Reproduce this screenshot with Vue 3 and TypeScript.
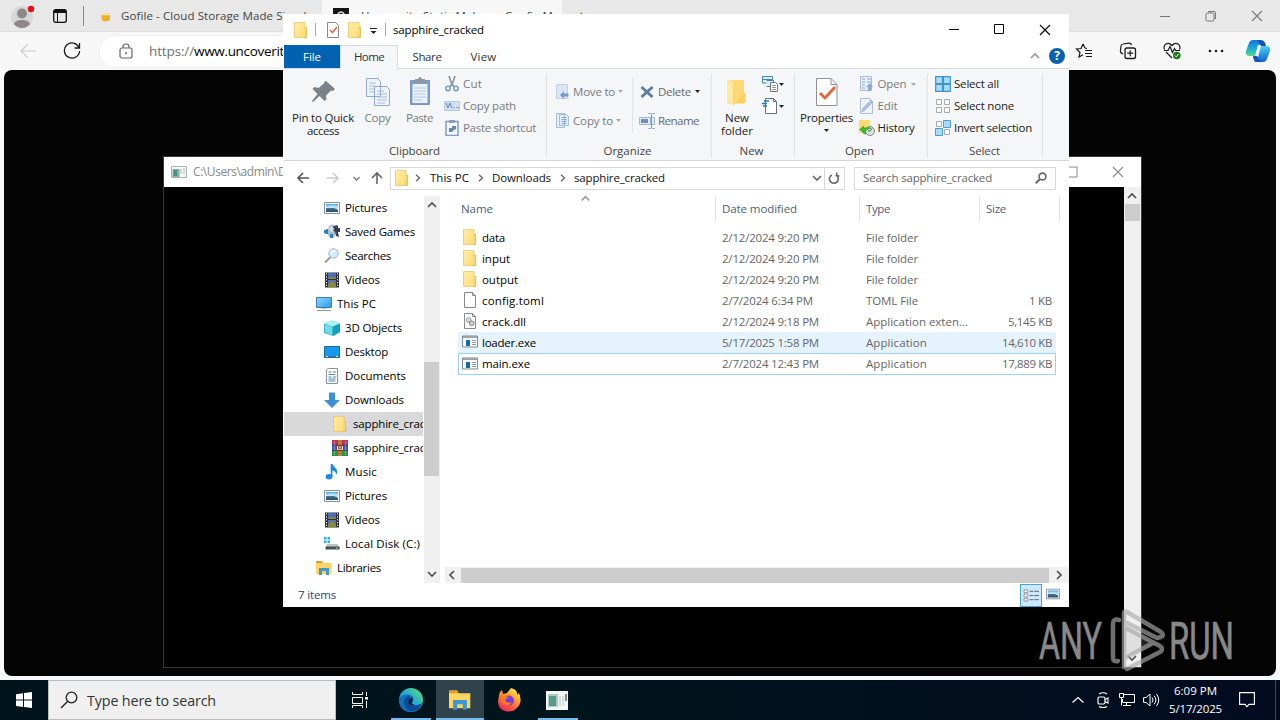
<script setup lang="ts">
interface Entry { icon: string; name: string; w: number; date: string; dw: number; type: string; tw: number; size?: string; sw?: number; state?: string }
interface Node { icon: string; name: string; w: number; level: number; current?: boolean }
interface Command { icon: string; text?: string; w?: number; caret?: boolean; dim?: boolean }

// Spreads a label over the given width so that columns keep their metrics.
const vFit = {
  mounted(el: HTMLElement, binding: { value: number | undefined }) {
    const width = binding.value
    const count = (el.textContent ?? '').length
    if (!width || !count) return
    el.style.letterSpacing = `${(width - el.getBoundingClientRect().width) / count}px`
  },
}

const tree: Node[] = [
  { icon: 'picture', name: 'Pictures', w: 42, level: 2 },
  { icon: 'games', name: 'Saved Games', w: 70, level: 2 },
  { icon: 'searches', name: 'Searches', w: 46, level: 2 },
  { icon: 'video', name: 'Videos', w: 35, level: 2 },
  { icon: 'pc', name: 'This PC', w: 39, level: 1 },
  { icon: 'cube', name: '3D Objects', w: 57, level: 2 },
  { icon: 'desktop', name: 'Desktop', w: 43, level: 2 },
  { icon: 'document', name: 'Documents', w: 61, level: 2 },
  { icon: 'download', name: 'Downloads', w: 59, level: 2 },
  { icon: 'folder', name: 'sapphire_cracked', w: 91, level: 3, current: true },
  { icon: 'archive', name: 'sapphire_cracked', w: 91, level: 3 },
  { icon: 'music', name: 'Music', w: 32, level: 2 },
  { icon: 'picture', name: 'Pictures', w: 42, level: 2 },
  { icon: 'video', name: 'Videos', w: 35, level: 2 },
  { icon: 'disk', name: 'Local Disk (C:)', w: 75, level: 2 },
  { icon: 'libraries', name: 'Libraries', w: 44, level: 1 },
]

const files: Entry[] = [
  { icon: 'folder', name: 'data', w: 23, date: '2/12/2024 9:20 PM', dw: 97, type: 'File folder', tw: 52 },
  { icon: 'folder', name: 'input', w: 28, date: '2/12/2024 9:20 PM', dw: 97, type: 'File folder', tw: 52 },
  { icon: 'folder', name: 'output', w: 36, date: '2/12/2024 9:20 PM', dw: 97, type: 'File folder', tw: 52 },
  { icon: 'blank', name: 'config.toml', w: 62, date: '2/7/2024 6:34 PM', dw: 91, type: 'TOML File', tw: 52, size: '1 KB', sw: 23 },
  { icon: 'dll', name: 'crack.dll', w: 44, date: '2/12/2024 9:18 PM', dw: 97, type: 'Application exten...', tw: 102, size: '5,145 KB', sw: 44 },
  { icon: 'exe', name: 'loader.exe', w: 54, date: '5/17/2025 1:58 PM', dw: 97, type: 'Application', tw: 61, size: '14,610 KB', sw: 50, state: 'hover' },
  { icon: 'exe', name: 'main.exe', w: 48, date: '2/7/2024 12:43 PM', dw: 97, type: 'Application', tw: 61, size: '17,889 KB', sw: 50, state: 'focus' },
]

const clipboard: Command[] = [
  { icon: 'cut', text: 'Cut', w: 19, dim: true },
  { icon: 'path', text: 'Copy path', w: 53, dim: true },
  { icon: 'shortcut', text: 'Paste shortcut', w: 73, dim: true },
]
const transfer: Command[] = [
  { icon: 'move', text: 'Move to', w: 42, caret: true, dim: true },
  { icon: 'copyto', text: 'Copy to', w: 40, caret: true, dim: true },
]
const modify: Command[] = [
  { icon: 'delete', text: 'Delete', w: 33, caret: true },
  { icon: 'rename', text: 'Rename', w: 41 },
]
const open: Command[] = [
  { icon: 'open', text: 'Open', w: 29, caret: true, dim: true },
  { icon: 'edit', text: 'Edit', w: 20, dim: true },
  { icon: 'history', text: 'History', w: 37 },
]
const select: Command[] = [
  { icon: 'all', text: 'Select all', w: 45 },
  { icon: 'none', text: 'Select none', w: 60 },
  { icon: 'invert', text: 'Invert selection', w: 78 },
]
</script>

<template>
  <div class="desktop">
    <svg class="sprite" width="0" height="0">
      <defs>
        <linearGradient id="gFolder" x1="0" y1="0" x2="1" y2="1"><stop offset="0" stop-color="#ffeca3" /><stop offset="1" stop-color="#ffdc77" /></linearGradient>
        <linearGradient id="gScreen" x1="0" y1="0" x2="1" y2="1"><stop offset="0" stop-color="#8ed8fc" /><stop offset="1" stop-color="#2798e8" /></linearGradient>
        <linearGradient id="gPhoto" x1="0" y1="0" x2="0" y2="1"><stop offset="0" stop-color="#4b9fdf" /><stop offset=".48" stop-color="#d7edfa" /><stop offset=".5" stop-color="#487b84" /><stop offset="1" stop-color="#244c72" /></linearGradient>
        <linearGradient id="gEdge" x1="1" y1="0" x2="0" y2="1"><stop offset="0" stop-color="#63df70" /><stop offset=".5" stop-color="#20acd2" /><stop offset="1" stop-color="#126fc0" /></linearGradient>
        <linearGradient id="gFox" x1=".8" y1="0" x2=".2" y2="1"><stop offset="0" stop-color="#fff25a" /><stop offset=".4" stop-color="#ff9a25" /><stop offset="1" stop-color="#ef1d58" /></linearGradient>
        <linearGradient id="gCopA" x1="0" y1="0" x2="0" y2="1"><stop offset="0" stop-color="#1670dc" /><stop offset=".5" stop-color="#19a8d7" /><stop offset="1" stop-color="#57d893" /></linearGradient>
        <linearGradient id="gCopB" x1="0" y1="0" x2="0" y2="1"><stop offset="0" stop-color="#42d3f4" /><stop offset="1" stop-color="#1460cf" /></linearGradient>
      </defs>
      <symbol id="folder" viewBox="0 0 16 16"><path d="M1.500.4h10.500v5h1.600v10H1.500z" fill="url(#gFolder)" stroke="#e7c766" stroke-width=".8" /><path d="M11.700 5.500h1.900v10h-3" fill="#f6d775" stroke="#dfba55" stroke-width=".8" /></symbol>
      <symbol id="picture" viewBox="0 0 16 16"><path d="M.5 2.500h15v11H.5z" fill="#fff" stroke="#82909b" /><path d="M2 4h12v8H2z" fill="url(#gPhoto)" /><path d="M2 7q6-1 12 3V6.500Q8 4 2 7z" fill="#b7ddf2" /></symbol>
      <symbol id="games" viewBox="0 0 16 16"><path d="M4 5l1-3q3-3 6 0l1 5-2 7-5-1-1-3z" fill="#a9bcc9" /><path d="M9 2l2 0 1-1 2 1 0 2 2 0 0 4-2 0 1 5-3-1-1-4-2-2z" fill="#3b424a" /><path d="M0 6h2V5h2v5H2L0 9zM6 10h3v4H6z" fill="#3180ba" /><path d="M6 3q3-2 4 2L8 8 5 6z" fill="#d6e6ef" /></symbol>
      <symbol id="searches" viewBox="0 0 16 16"><path d="M1 14.500l5.500-5.500" stroke="#9a9da0" stroke-width="2" /><circle cx="9.500" cy="5.500" r="4.700" fill="#d1ecfa" stroke="#9fb4c2" /><path d="M7 5q1-3 4-2" stroke="#fff" stroke-width="1.500" fill="none" /></symbol>
      <symbol id="video" viewBox="0 0 16 16"><path d="M1 .5h14v15H1z" fill="#303138" /><path d="M4 1h8v6H4z" fill="#476dba" /><path d="M4 8h8v7H4z" fill="#6169ba" /><path d="M4 7l3-3 3 2 2-2v3zM4 13l4-4 4 3v3H4z" fill="#858d35" /><path d="M2.500 1.500v13M13.500 1.500v13" stroke="#eee" stroke-dasharray="1.300 1.500" /></symbol>
      <symbol id="pc" viewBox="0 0 16 16"><path d="M.5 1.500h15v10H.5z" fill="url(#gScreen)" stroke="#3d7da9" /><path d="M5 12h6v1H5z" fill="#b7cad5" /><path d="M1 14.500h14" stroke="#8799a5" /></symbol>
      <symbol id="cube" viewBox="0 0 16 16"><path d="M0 3.500L8 .5l8 3v8.500l-7 4-9-3z" fill="#35bbd0" /><path d="M0 3.500l9 3 7-3-8-3z" fill="#b0f1f4" /><path d="M9 6.500l7-3V12l-7 4z" fill="#159fbd" /><path d="M1 4l7 3v8L1 12z" fill="#73d9e5" /></symbol>
      <symbol id="desktop" viewBox="0 0 16 16"><path d="M.5 2.500h15v11H.5z" fill="#1699ed" stroke="#176ca5" /><path d="M1 12.500h14" stroke="#3f74a0" /><path d="M2 12.500h2M12 12.500h2" stroke="#fff" /></symbol>
      <symbol id="document" viewBox="0 0 16 16"><path d="M2.500 1.500l2-1h9v15h-11z" fill="#fff" stroke="#8c9398" /><path d="M4.500 4h3M9 4h3M4.500 6.500h7M4.500 9h3M9 9h3M4.500 11h7M4.500 13h7" stroke="#478bae" /></symbol>
      <symbol id="download" viewBox="0 0 16 16"><path d="M5 .5h6V8h5l-8 8-8-8h5z" fill="#3a91d7" /></symbol>
      <symbol id="archive" viewBox="0 0 16 16"><path d="M0 0h16v5H0z" fill="#c0305c" /><path d="M0 5h16v5.500H0z" fill="#3c58c4" /><path d="M0 10.500h16V16H0z" fill="#259545" /><path d="M0 5h16M0 10.500h16" stroke="#33284b" /><path d="M6 0h4v16H6z" fill="#c4772d" /><path d="M4.500 5.500h7v5h-7z" fill="#f0dcae" stroke="#783b33" /><path d="M6.500 6v3h3V6M8 6v3" fill="none" stroke="#704860" stroke-width=".8" /><path d="M2.500 1v14M13.500 1v14" stroke="#fff" stroke-opacity=".25" stroke-width="1.500" /></symbol>
      <symbol id="music" viewBox="0 0 16 16"><ellipse cx="5" cy="12.800" rx="3.400" ry="2.700" fill="#188cdf" /><path d="M6.700 0h1.700q1 2 3 4 3 3 1 7-.2-4-4-4.500v6.500H6.700z" fill="#188cdf" /></symbol>
      <symbol id="disk" viewBox="0 0 16 16"><path d="M0 0h2.500v2.500H0zM3.500 0H6v2.500H3.500zM0 3.500h2.500V6H0zM3.500 3.500H6V6H3.500z" fill="#17b5e4" transform="translate(0 1)" /><path d="M3 8h10l2.500 3v2H2v-2z" fill="#bac2c6" /><path d="M1.500 10.500h14v3h-14z" fill="#475054" /><path d="M12 12h2" stroke="#66ec77" /></symbol>
      <symbol id="libraries" viewBox="0 0 16 16"><path d="M0 1h6l1 2h8.500v11H0z" fill="#ffd45f" /><path d="M0 1h6l1 2H0z" fill="#dc9d34" /><path d="M3 15V8h10v7h-3v-4H6v4z" fill="#3b98d2" /></symbol>
      <symbol id="blank" viewBox="0 0 16 16"><path d="M2.500.5h8l3 3v12h-11z" fill="#fff" stroke="#898989" /><path d="M10.500.5v3h3" fill="none" stroke="#898989" /></symbol>
      <symbol id="dll" viewBox="0 0 16 16"><path d="M2.500.5h8l3 3v12h-11z" fill="#fafafa" stroke="#898989" /><path d="M10.500.5v3h3" fill="none" stroke="#898989" /><circle cx="6.700" cy="7" r="2.300" fill="#d9e1e4" stroke="#8b999f" /><circle cx="9.700" cy="10.300" r="2.300" fill="#cbd4d8" stroke="#78868e" /></symbol>
      <symbol id="exe" viewBox="0 0 16 16"><path d="M.5 2h15v11H.5z" fill="#f7f7f7" stroke="#858b8e" /><path d="M1 3h14" stroke="#9ba6ac" stroke-width="2" /><path d="M4 6h4v6H4z" fill="#1769ae" /><path d="M10 6.500h4M10 8.500h4M10 10.500h4" stroke="#899aa4" /></symbol>
      <symbol id="terminal" viewBox="0 0 16 12"><path d="M.5.5h15v11H.5z" fill="#f6f8f5" stroke="#aab5b2" /><path d="M1.500 3h7v8h-7z" fill="#7fb5a3" /><path d="M2.500 4h3.500v6H2.500z" fill="#4c8f80" /><path d="M10 3v5M13 2v6" stroke="#aab8bc" /></symbol>
      <symbol id="pin" viewBox="0 0 32 32"><path d="M19 5l9 8-2 2-2-.5-5 5 .5 4-2 1.500-5-5L6 26l-1-1 5.500-7-5-5 2-2 4 1 6-5-.5-1z" fill="#7b8388" /></symbol>
      <symbol id="copy" viewBox="0 0 32 32"><g fill="#f0f5fd" stroke="#8fabd4"><path d="M4.500 2.500h11l3 3v15h-14zM12.500 10.500h12l3 3v16h-15z" /></g><path d="M7 7h7M7 10h5M7 13h5M7 16h5M15 15h7M15 18h10M15 21h10M15 24h10M15 27h8" stroke="#a6bddf" /></symbol>
      <symbol id="paste" viewBox="0 0 32 32"><path d="M6.500 4.500h19v24h-19z" fill="#7d9dc9" stroke="#7795bf" /><path d="M8.500 8h15v19h-15z" fill="#eaf1fb" /><path d="M11 3h3q2-4 4 0h3v4H11z" fill="#8e989f" /><path d="M10 12h12M10 15h12M10 18h12M10 21h12M10 24h8" stroke="#b1c8e8" /></symbol>
      <symbol id="cut" viewBox="0 0 16 16"><path d="M5 0l2 6 3 5M11 0L9 6l-3 5" fill="none" stroke="#8996a0" stroke-width="1.700" /><circle cx="4" cy="12.500" r="2.200" fill="none" stroke="#7699c6" stroke-width="1.500" /><circle cx="12" cy="12.500" r="2.200" fill="none" stroke="#7699c6" stroke-width="1.500" /></symbol>
      <symbol id="path" viewBox="0 0 16 16"><path d="M.5 3.500h15v9H.5z" fill="#d3e0f2" stroke="#b7c9e1" /><path d="M2 5l2 5 2-5 2 5M9.500 9.500h1M12 9.500h1M14 9.500h1" fill="none" stroke="#6585b4" /></symbol>
      <symbol id="shortcut" viewBox="0 0 16 16"><path d="M2 1.500h12v14H2z" fill="#f5f9fe" stroke="#7d9dc9" stroke-width="1.500" /><path d="M5 0h6v3H5z" fill="#8ba0b9" /><path d="M5 12V8h3V6h4v4l-1-1-3 3z" fill="#6689bd" /></symbol>
      <symbol id="move" viewBox="0 0 16 16"><path d="M1.500.5h11v14h-11z" fill="#dbe6f4" stroke="#bfd0e7" /><path d="M5 11l4-4v2.500h4.500v3H9V15z" fill="#7b9bc7" /></symbol>
      <symbol id="copyto" viewBox="0 0 16 16"><path d="M1.500.5h8v14h-8zM4.500 1.500h7l2 2v9h-9z" fill="#e4edf9" stroke="#a6bcdd" /><path d="M6.500 4.500h5M6.500 6.500h5M6.500 8.500h5M6.500 10.500h5" stroke="#8eabd4" /></symbol>
      <symbol id="delete" viewBox="0 0 16 16"><path d="M2.500 3l11 10M13.500 3l-11 10" stroke="#5f7ba3" stroke-width="2.900" /></symbol>
      <symbol id="rename" viewBox="0 0 16 16"><path d="M.5 4.500h11v7H.5zM13 4.500h2.500v7H13" fill="#e4edf9" stroke="#9eb7da" /><path d="M2 6h7v4H2z" fill="#708fbf" /><path d="M9.500.5h2l1 1 1-1h2M12.500 1.500v13M9.500 15.500h2l1-1 1 1h2" stroke="#7a95bd" fill="none" /></symbol>
      <symbol id="newfolder" viewBox="0 0 32 32"><path d="M6 4h17v24H6z" fill="#ffe28b" /><path d="M12 4h11v23h-11z" fill="#ffd975" /><path d="M23 17h1.500v10H15z" fill="#f8cf65" /><path d="M6 4h2l5 4v21l-1 .5L6 27z" fill="#ffe9a1" /><path d="M13 8v21" stroke="#eec45f" stroke-width=".8" /></symbol>
      <symbol id="newitem" viewBox="0 0 16 16"><path d="M.5.5h10v3H.5zM.5 3v4h4M4.500 4.500h7v6h-7" fill="#d9edf8" stroke="#418aac" /><path d="M8.500 6.500h5l2 2v7h-7z" fill="#fff" stroke="#777" /><path d="M10 9.500h4M10 11.500h4M10 13.500h4" stroke="#999" /></symbol>
      <symbol id="easy" viewBox="0 0 16 16"><path d="M3.500.5h8l3 3v12h-11z" fill="#fff" stroke="#667078" /><path d="M11.500.5v3h3" fill="none" stroke="#667078" /><path d="M2 3h5M0 5.500h5M1 8h4" stroke="#2678a8" stroke-width="1.500" /></symbol>
      <symbol id="properties" viewBox="0 0 32 32"><path d="M5.500 2.500H20l6 6v21H5.500z" fill="#fff" stroke="#8c9296" /><path d="M20 2.500v6h6" fill="none" stroke="#8c9296" /><path d="M9 17l5 5 10-11" fill="none" stroke="#e66435" stroke-width="2.800" /></symbol>
      <symbol id="smallprops" viewBox="0 0 16 16"><path d="M2.500.5h8l3 3v12h-11z" fill="#fff" stroke="#858b90" /><path d="M5 8l2.500 2.500L12 5" fill="none" stroke="#d8704f" stroke-width="1.700" /></symbol>
      <symbol id="open" viewBox="0 0 16 16"><path d="M1.500.5h11v14h-11z" fill="#e9f0fb" stroke="#a7bcdc" /><path d="M3 3h3M8 3h4M3 6h3M8 6h4M3 9h3M3 12h3" stroke="#88a5d0" /><path d="M9 15v-4H7l4-4 3 4h-2v4z" fill="#8daad5" /></symbol>
      <symbol id="edit" viewBox="0 0 16 16"><path d="M1.500.5h9l3 3v12h-12z" fill="#eff4fc" stroke="#a9bddf" /><path d="M3 14l1-4 8-8 2 2-8 8z" fill="#b0c5e5" stroke="#93abd0" stroke-width=".7" /></symbol>
      <symbol id="history" viewBox="0 0 16 16"><path d="M0 0h11v13H0z" fill="#ffdc69" /><circle cx="11" cy="11" r="4.500" fill="#dce3df" stroke="#7d8c85" /><path d="M11 11l2-2.500M9 11h2" stroke="#4d655a" fill="none" /><path d="M0 9.500l5-4v2.300q5-1.800 8 .7-4-.2-6 2.500v3.500q-3 0-4-3z" fill="#45af3c" /></symbol>
      <symbol id="all" viewBox="0 0 16 16"><path d="M.7.7h6.800v6.800H.7zM8.500.7h6.800v6.800H8.500zM.7 8.500h6.800v6.800H.7zM8.500 8.500h6.800v6.800H8.500z" fill="#a9dbfa" stroke="#3e95cb" stroke-width="1.200" /></symbol>
      <symbol id="none" viewBox="0 0 16 16"><path d="M1.500 1.500h5v5h-5zM9.500 1.500h5v5h-5zM1.500 9.500h5v5h-5zM9.500 9.500h5v5h-5z" fill="#fff" stroke="#aaa" /></symbol>
      <symbol id="invert" viewBox="0 0 16 16"><path d="M1.500 1.500h5v5h-5zM9.500 9.500h5v5h-5z" fill="#fff" stroke="#aaa" /><path d="M8.500.5h7v7h-7zM.5 8.500h7v7h-7z" fill="#a9dbfa" stroke="#499fd2" /></symbol>
      <symbol id="caret" viewBox="0 0 5 3"><path d="M0 0h5L2.500 3z" fill="currentColor" /></symbol>
      <symbol id="chevR" viewBox="0 0 8 8"><path d="M2 .8L5.500 4 2 7.200" fill="none" stroke="currentColor" stroke-width="1.400" /></symbol>
      <symbol id="chevU" viewBox="0 0 12 12"><path d="M2 8l4-4 4 4" fill="none" stroke="currentColor" stroke-width="1.700" /></symbol>
      <symbol id="chevD" viewBox="0 0 12 12"><path d="M2 4l4 4 4-4" fill="none" stroke="currentColor" stroke-width="1.700" /></symbol>
      <symbol id="chevL" viewBox="0 0 12 12"><path d="M8 2L4 6l4 4" fill="none" stroke="currentColor" stroke-width="1.700" /></symbol>
      <symbol id="chevRt" viewBox="0 0 12 12"><path d="M4 2l4 4-4 4" fill="none" stroke="currentColor" stroke-width="1.700" /></symbol>
      <symbol id="close" viewBox="0 0 12 12"><path d="M1 1l10 10M11 1L1 11" stroke="currentColor" stroke-width="1.100" /></symbol>
      <symbol id="lens" viewBox="0 0 16 16"><circle cx="9.500" cy="6.500" r="3.400" fill="none" stroke="currentColor" stroke-width="1.600" /><path d="M7 9l-4.300 4.300" stroke="currentColor" stroke-width="2" /></symbol>
      <symbol id="arrow" viewBox="0 0 14 14"><path d="M13 7H2M7 2L2 7l5 5" fill="none" stroke="currentColor" stroke-width="1.600" /></symbol>
    </svg>

    <section class="browser">
      <div class="strip">
        <svg class="avatar" viewBox="0 0 28 28"><circle cx="14" cy="16" r="11" fill="#d7d7d7" /><circle cx="14" cy="12.500" r="5" fill="#8d8986" /><path d="M6 23q1-4 8-4t8 4q-3 4-8 4t-8-4" fill="#8d8986" /><circle cx="23" cy="8" r="3.200" fill="#e6101c" /></svg>
        <svg class="tabsIcon" viewBox="0 0 14 14"><rect x=".7" y=".7" width="12.600" height="12.600" rx="2" fill="none" stroke="#111" stroke-width="1.300" /><path d="M1 1h12v3H1z" fill="#111" /><path d="M4.500 3v10" stroke="#111" /></svg>
        <i class="bar"></i>
        <svg class="cup" viewBox="0 0 12 10"><path d="M1 1l10-.5v6q-1 3-5 3T2 7z" fill="#efae29" /><path d="M1 1l10-.5v2H1z" fill="#ffe5a2" /></svg>
        <div class="tabText"><span v-fit="192">Gofile - Cloud Storage Made Simple</span></div>
        <div class="activeTab"><span class="fav"><svg viewBox="0 0 16 16"><path d="M4 7q4-6 8 0M5 10q3-5 6 0" fill="none" stroke="#ddd" stroke-width="1.300" /></svg></span><span v-fit="192">Uncoverit - Static Malware Config M</span></div>
        <span class="plus">+</span>
        <div class="caption">
          <svg viewBox="0 0 12 12"><path d="M1 6.500h10" stroke="currentColor" /></svg>
          <svg viewBox="0 0 12 12"><rect x="1" y="3" width="8" height="8" rx="1.500" fill="none" stroke="currentColor" /><path d="M3 1.500h6q1.500 0 1.500 1.500v6" fill="none" stroke="currentColor" /></svg>
          <svg><use href="#close" /></svg>
        </div>
      </div>
      <div class="toolbar">
        <svg class="back" viewBox="0 0 18 18"><path d="M17 9H2M8.500 2.500L2 9l6.500 6.500" fill="none" stroke="#cacaca" stroke-width="1.200" /></svg>
        <svg class="reload" viewBox="0 0 18 18"><path d="M16 5.500A7.600 7.600 0 1 0 16.600 9M16.500 1v5h-5" fill="none" stroke="#1c1c1c" stroke-width="1.300" /></svg>
        <div class="omnibox"><svg viewBox="0 0 14 16"><rect x="1" y="5" width="12" height="10" rx="2" fill="none" stroke="#666" stroke-width="1.200" /><path d="M4 5V3.500Q4 1 7 1t3 2.500V5" fill="none" stroke="#666" stroke-width="1.200" /><circle cx="7" cy="10.200" r="1" fill="#666" /></svg><span v-fit="45" class="scheme">https://</span><span v-fit="90">www.uncoverit</span></div>
        <div class="tools">
          <svg viewBox="0 0 18 18"><path d="M8 2l2 4 2 .5M8 2L6 6.500l-4.500.5L5 10.500 4 15l4-2.300M10 8.500h7M10 11.500h7M11 14.500h6" fill="none" stroke="currentColor" stroke-width="1.200" /></svg>
          <svg viewBox="0 0 18 18"><path d="M4 12Q1 11 1.500 8L2 4q.3-2 2-2l6-.8q2-.2 2.500 2" fill="none" stroke="currentColor" stroke-width="1.200" /><rect x="6" y="6" width="10.500" height="10.500" rx="2" fill="none" stroke="currentColor" stroke-width="1.300" /><path d="M11.200 8.200v6M8.200 11.200h6" stroke="currentColor" stroke-width="1.200" /></svg>
          <svg viewBox="0 0 18 18"><path d="M1.500 7.500Q0 4 3 2q3-2 6 1.500Q12 0 15 2q3 2 1.500 5.500M3 10l6 6M1 8.500h4l2-4 2.500 6 2-4 1 2H17" fill="none" stroke="currentColor" stroke-width="1.200" /><circle cx="13.800" cy="13.500" r="3.800" fill="#187b18" /><path d="M12 13.500l1.200 1.300 2.500-2.800" fill="none" stroke="#fff" /></svg>
          <svg viewBox="0 0 18 18"><g fill="currentColor"><circle cx="3" cy="9" r="1.300" /><circle cx="9" cy="9" r="1.300" /><circle cx="15" cy="9" r="1.300" /></g></svg>
          <svg class="copilot" viewBox="0 0 24 24"><path d="M7 1h8l2 5h-5L9 17H4Q-1 17 0 12L3 4q1-3 4-3" fill="url(#gCopA)" /><path d="M15 7h5q5 0 4 5l-3 8q-1 3-4 3H9l-2-5h5z" fill="url(#gCopB)" /><path d="M15 1q4 0 5 6h-5q-2-4-4-6M7 17q1 6 4 6h5q-3-1-5-6" fill="#1552bd" /></svg>
        </div>
      </div>
      <div class="page"></div>
    </section>

    <section class="console">
      <div class="ctitle"><svg class="cicon"><use href="#terminal" /></svg><span v-fit="100">C:\Users\admin\Do</span><div class="cbtns"><svg viewBox="0 0 12 12"><path d="M1 1h10v10H1z" fill="none" stroke="currentColor" /></svg><svg><use href="#close" /></svg></div></div>
      <div class="cbody"><div class="vbar"><svg><use href="#chevU" /></svg><i class="cthumb"></i><svg class="end"><use href="#chevD" /></svg></div></div>
    </section>

    <section class="explorer">
      <header class="title">
        <svg class="i16"><use href="#folder" /></svg><i class="tsep"></i>
        <svg class="i16 sp"><use href="#smallprops" /></svg><svg class="i16 nf"><use href="#folder" /></svg>
        <svg class="qa" viewBox="0 0 7 7"><path d="M0 .5h7" stroke="#222" /><path d="M.5 3h6l-3 3z" fill="#222" /></svg><i class="tsep two"></i>
        <span v-fit="91">sapphire_cracked</span>
        <div class="winbtns"><svg viewBox="0 0 12 12"><path d="M1 5.500h10" stroke="currentColor" /></svg><svg viewBox="0 0 12 12"><path d="M1.500.5h9v9h-9z" fill="none" stroke="currentColor" /></svg><svg class="x"><use href="#close" /></svg></div>
      </header>
      <nav class="tabs">
        <span class="tab file"><b v-fit="18">File</b></span><span class="tab home"><b v-fit="30">Home</b></span><span class="tab share"><b v-fit="29">Share</b></span><span class="tab view"><b v-fit="26">View</b></span>
        <svg class="collapse"><use href="#chevU" /></svg>
        <span class="help">?</span>
      </nav>
      <div class="ribbon">
        <div class="group g1">
          <div class="gbody">
            <div class="big pinb"><svg><use href="#pin" /></svg><span v-fit="62">Pin to Quick</span><span v-fit="32">access</span></div>
            <div class="big cp dim"><svg><use href="#copy" /></svg><span v-fit="26">Copy</span></div>
            <div class="big ps dim"><svg><use href="#paste" /></svg><span v-fit="27">Paste</span></div>
            <div class="col"><div v-for="c in clipboard" :key="c.icon" class="cmd dim"><svg><use :href="'#' + c.icon" /></svg><span v-fit="c.w">{{ c.text }}</span></div></div>
          </div>
          <div class="glabel"><span v-fit="51">Clipboard</span></div>
        </div>
        <div class="group g2">
          <div class="gbody">
            <div class="col wide tight"><div v-for="c in transfer" :key="c.icon" class="cmd dim"><svg><use :href="'#' + c.icon" /></svg><span v-fit="c.w">{{ c.text }}</span><svg class="caret"><use href="#caret" /></svg></div></div>
            <i class="inner"></i>
            <div class="col wide mod"><div v-for="c in modify" :key="c.icon" class="cmd grey"><svg><use :href="'#' + c.icon" /></svg><span v-fit="c.w">{{ c.text }}</span><svg v-if="c.caret" class="caret dark"><use href="#caret" /></svg></div></div>
          </div>
          <div class="glabel org"><span v-fit="48">Organize</span></div>
        </div>
        <div class="group g3">
          <div class="gbody">
            <div class="big newb"><svg><use href="#newfolder" /></svg><span v-fit="24">New</span><span v-fit="32">folder</span></div>
            <div class="col"><div v-for="n in ['newitem', 'easy']" :key="n" class="cmd solo"><svg><use :href="'#' + n" /></svg><svg class="caret dark"><use href="#caret" /></svg></div></div>
          </div>
          <div class="glabel org"><span v-fit="24">New</span></div>
        </div>
        <div class="group g4">
          <div class="gbody">
            <div class="big prop"><svg><use href="#properties" /></svg><span v-fit="53">Properties</span><svg class="caret dark"><use href="#caret" /></svg></div>
            <div class="col"><div v-for="c in open" :key="c.icon" class="cmd" :class="{ dim: c.dim }"><svg><use :href="'#' + c.icon" /></svg><span v-fit="c.w">{{ c.text }}</span><svg v-if="c.caret" class="caret"><use href="#caret" /></svg></div></div>
          </div>
          <div class="glabel org"><span v-fit="29">Open</span></div>
        </div>
        <div class="group g5">
          <div class="gbody">
            <div class="col"><div v-for="c in select" :key="c.icon" class="cmd"><svg><use :href="'#' + c.icon" /></svg><span v-fit="c.w">{{ c.text }}</span></div></div>
          </div>
          <div class="glabel"><span v-fit="31">Select</span></div>
        </div>
      </div>

      <div class="address">
        <svg class="a1"><use href="#arrow" /></svg>
        <svg class="a2"><use href="#arrow" /></svg>
        <svg class="a3"><use href="#chevD" /></svg>
        <svg class="a4"><use href="#arrow" /></svg>
        <div class="crumbs">
          <svg class="i16"><use href="#folder" /></svg>
          <svg class="chev"><use href="#chevR" /></svg><span v-fit="39">This PC</span>
          <svg class="chev"><use href="#chevR" /></svg><span v-fit="59">Downloads</span>
          <svg class="chev"><use href="#chevR" /></svg><span v-fit="91">sapphire_cracked</span>
          <svg class="drop"><use href="#chevD" /></svg>
          <div class="refresh"><svg viewBox="0 0 12 12"><path d="M8.200 2.500A4.400 4.400 0 1 1 3.800 2.700M3 .2l.6 2.900-2.900.5" fill="none" stroke="#666" stroke-width="1.600" transform="matrix(-1 0 0 1 12 0)" /></svg></div>
        </div>
        <div class="search"><span v-fit="129">Search sapphire_cracked</span><svg><use href="#lens" /></svg></div>
      </div>

      <div class="main">
        <div class="tree">
          <div v-for="(n, i) in tree" :key="i" class="node" :class="['l' + n.level, { current: n.current }]"><svg><use :href="'#' + n.icon" /></svg><span v-fit="n.w">{{ n.name }}</span></div>
        </div>
        <div class="vbar tbar"><svg><use href="#chevU" /></svg><i class="tthumb"></i><svg class="end"><use href="#chevD" /></svg></div>
        <div class="pane">
          <div class="head">
            <div class="h hn"><span v-fit="32">Name</span><svg class="sort"><use href="#chevU" /></svg></div><div class="h hd"><span v-fit="75">Date modified</span></div><div class="h ht"><span v-fit="24">Type</span></div><div class="h hs"><span v-fit="20">Size</span></div>
          </div>
          <div class="rows">
            <div v-for="f in files" :key="f.name" class="row" :class="f.state">
              <svg><use :href="'#' + f.icon" /></svg>
              <div class="cn"><span v-fit="f.w">{{ f.name }}</span></div>
              <div class="cd"><span v-fit="f.dw">{{ f.date }}</span></div>
              <div class="ct"><span v-fit="f.tw">{{ f.type }}</span></div>
              <div class="cs"><span v-if="f.size" v-fit="f.sw">{{ f.size }}</span></div>
            </div>
          </div>
          <div class="hbar"><svg><use href="#chevL" /></svg><i></i><svg><use href="#chevRt" /></svg></div>
        </div>
      </div>
      <footer class="status">
        <span v-fit="38">7 items</span>
        <div class="mode on"><svg viewBox="0 0 18 14"><path d="M1 1h4v3H1zM1 5.500h4v3H1zM1 10h4v3H1z" fill="#fff" stroke="#8a8290" stroke-width=".9" /><path d="M7 2.500h4M12 2.500h5M7 7h4M12 7h5M7 11.500h4M12 11.500h5" stroke="#54606a" /></svg></div>
        <svg class="large"><use href="#picture" /></svg>
      </footer>
    </section>

    <svg class="mark" viewBox="0 0 194 66">
      <g class="wordmark"><text x="0" y="52" textLength="63" lengthAdjust="spacingAndGlyphs">ANY</text><text x="129" y="52" textLength="65" lengthAdjust="spacingAndGlyphs">RUN</text></g>
      <g transform="translate(1 0)">
        <path d="M79 13q-6-2-6 4v34q0 4 5 3M84 60V6q0-2 3-1l34 20q4 3 0 5l-4 1-32-16M84 20l36 19q4 3 0 6L87 62M87 50l24-13" fill="none" stroke="#aaa" stroke-opacity=".65" stroke-width="4.500" stroke-linejoin="round" stroke-linecap="round" />
        <path d="M85 18v32l32-12z" fill="#999" fill-opacity=".2" />
      </g>
    </svg>

    <footer class="taskbar">
      <div class="start"><svg viewBox="0 0 16 16"><path d="M0 2.200l7-1v6.400H0zM8 1.100L16 0v7.600H8zM0 8.500h7v6.400l-7-1zM8 8.500h8V16l-8-1.100z" fill="#fff" /></svg></div>
      <div class="find"><svg viewBox="0 0 18 18"><circle cx="11.500" cy="6.500" r="5.300" fill="none" stroke="#222" stroke-width="1.300" /><path d="M7.500 10.500L1 17" stroke="#222" stroke-width="1.400" /></svg><span v-fit="129">Type here to search</span></div>
      <div class="task first"><svg class="tv" viewBox="0 0 16 16"><path d="M.5 0v2.500h10V0M.5 5.500h10v6H.5zM.5 16v-2.500h10V16M14.500 0v4M14.500 9v7" fill="none" stroke="#fff" /><path d="M13 5h3v2.500h-3z" fill="#fff" /></svg></div>
      <div class="task run"><svg class="i24" viewBox="0 0 24 24"><circle cx="12" cy="12" r="12" fill="url(#gEdge)" /><path d="M0 12Q2 6 9 6.500q6 .5 5.500 5-.5 1.500-1.500 2.500-1 2 3 3 3 .5 7-2-3 9-11 9Q1 24 0 12" fill="#156eb9" /><path d="M9 8q-7 5-2 12 3 4 8 3 6-2 7.500-7-6 3-10 1Q8 14 12 9.500 11 8 9 8" fill="#0b4b97" /><path d="M12.500 10q3 1 .5 4-1 2 3 3-5 1-6.500-2.500-.8-3 3-4.500" fill="#03253d" /></svg></div>
      <div class="task run active"><svg class="i22"><use href="#libraries" /></svg></div>
      <div class="task"><svg class="i24" viewBox="0 0 24 24"><path d="M2 8q0-4 3-6l1 4 4-1 4-5q7 2 6 7l2-2q4 9-2 15-5 5-12 3-7-2-7-10z" fill="url(#gFox)" /><circle cx="12" cy="12.500" r="5" fill="#7a3be0" /><path d="M4 9q4-2 8 .5-5 1-3 4 2 2 6 1-3 4-7 2-4-3-4-7.500" fill="#ff7b25" /></svg></div>
      <div class="task run"><svg class="term" viewBox="0 0 22 19"><path d="M0 0h22v19H0z" fill="#f4f6f4" /><path d="M2 3h10v13H2z" fill="#a9cdc2" /><path d="M3 5h7v10H3z" fill="#5b9a8a" /><path d="M14 5v10M17 5v10" stroke="#cbd3d4" stroke-width="1.500" /><path d="M20 3v7" stroke="#3a4a55" stroke-width="1.300" /></svg></div>
      <div class="tray">
        <svg class="up" viewBox="0 0 14 8"><path d="M1.500 6.500L7 1.500l5.500 5" fill="none" stroke="#fff" stroke-width="1.200" /></svg>
        <svg class="meet" viewBox="0 0 14 16"><rect x="2" y="5" width="7" height="7" rx="1.500" fill="none" stroke="#fff" stroke-width="1.200" /><path d="M9 7.500l3-1.500v5L9 9.500M3 2q4-2.500 8 0M3 14.500q4 2.200 8 0" fill="none" stroke="#fff" stroke-width="1.100" /></svg>
        <svg class="net" viewBox="0 0 16 14"><path d="M5 1.500h10.500v8H3.500V6M7.500 9.500v3M4 12.500h8M.5.5h4v4h-4zM2.500 4.500v8" fill="none" stroke="#fff" /></svg>
        <svg class="vol" viewBox="0 0 17 14"><path d="M.6 4.500h2.500L7 1v12L3.100 9.500H.6zM9 4.500q2 2.500 0 5M11.200 2.800q3.300 4.200 0 8.400M13.500 1q4.500 6 0 12" fill="none" stroke="#fff" /></svg>
        <div class="clock"><span v-fit="43">6:09 PM</span><span v-fit="53">5/17/2025</span></div>
        <svg class="note" viewBox="0 0 16 16"><path d="M.6.6h14.800v11.800H10L8 14.600l-2-2.200H.6z" fill="none" stroke="#fff" stroke-width="1.100" /></svg>
        <i class="peek"></i>
      </div>
    </footer>
  </div>
</template>

<style>
body { margin: 0; overflow: hidden; }
</style>

<style scoped>
* { box-sizing: border-box; }
.desktop { position: relative; width: 1280px; height: 720px; overflow: hidden; background: #f7f8fa; font: 11.5px/14px "Open Sans", "Noto Sans", sans-serif; color: #000; }
.sprite { position: absolute; }
svg { display: block; flex: none; }
span, b { white-space: pre; flex: none; font-weight: 400; }

.browser { height: 680px; display: flex; flex-direction: column; }
.strip { height: 32px; background: #e8e8e8; border-bottom: 1px solid #dedede; display: flex; align-items: center; color: #444; }
.avatar { width: 28px; height: 28px; margin-left: 8px; margin-bottom: 1px; }
.tabsIcon { width: 14px; height: 14px; margin-left: 17px; }
.bar { width: 1px; height: 20px; background: #888; margin-left: 16px; }
.cup { width: 11px; height: 9px; margin: 3px 0 0 16px; }
.tabText { margin-left: 10px; width: 192px; display: flex; }
.activeTab { margin-left: 9px; width: 240px; align-self: stretch; background: #f7f7f7; display: flex; align-items: center; }
.fav { width: 16px; height: 16px; background: #151515; margin: 0 12px 0 11px; }
.plus { margin-left: 13px; font-size: 22px; font-weight: 300; }
.caption { margin-left: auto; display: flex; gap: 34px; margin-right: 17px; color: #777; }
.caption svg { width: 12px; height: 12px; }
.toolbar { height: 38px; background: #f7f7f7; display: flex; align-items: center; }
.back { width: 18px; height: 18px; margin-left: 19px; }
.reload { width: 18px; height: 18px; margin-left: 26px; }
.omnibox { margin-left: 19px; width: 300px; height: 31px; border-radius: 16px; background: #fff; display: flex; align-items: center; font-size: 13.5px; box-shadow: 0 0 2px #e4e4e4; }
.omnibox svg { width: 14px; height: 16px; margin: 0 16px 0 19px; }
.scheme { color: #6f6f6f; }
.tools { margin-left: auto; display: flex; gap: 26px; align-items: center; color: #1b1b1b; margin-right: 10px; }
.tools svg { width: 18px; height: 18px; }
.tools .copilot { width: 24px; height: 24px; margin-left: -5px; }
.page { margin: 0 4px 4px; flex: 1; background: #040404; border-radius: 8px; }

.console { position: absolute; left: 163px; top: 156px; width: 979px; height: 512px; border: 1px solid #393939; background: #000; display: flex; flex-direction: column; }
.ctitle { height: 30px; background: #fff; display: flex; align-items: center; color: #888; font-size: 12px; }
.cicon { width: 16px; height: 12px; margin: 0 6px 1px 7px; }
.cbtns { margin-left: auto; display: flex; gap: 34px; margin-right: 17px; color: #888; }
.cbtns svg { width: 12px; height: 12px; margin-bottom: 1px; }
.cbody { flex: 1; display: flex; justify-content: flex-end; }
.vbar { width: 17px; background: #f0f0f0; display: flex; flex-direction: column; align-items: flex-start; color: #505050; }
.vbar svg { width: 12px; height: 12px; margin: 3px 0 2px 2px; }
.vbar .end { margin: auto 0 3px 2px; }
.cthumb { width: 15px; height: 17px; background: #cdcdcd; margin-left: 1px; }

.explorer { position: absolute; left: 283px; top: 14px; width: 786px; height: 593px; background: #fff; padding-left: 1px; display: flex; flex-direction: column; }
.title { height: 31px; display: flex; align-items: center; padding-left: 9px; }
.i16 { width: 16px; height: 16px; }
.tsep { width: 1px; height: 13px; background: #a6a6a6; margin-left: 6px; }
.sp { margin-left: 9px; }
.nf { margin-left: 6px; }
.qa { width: 7px; height: 7px; margin: 3px 0 0 7px; }
.two { margin: 0 7px 0 8px; }
.winbtns { margin-left: auto; display: flex; gap: 33px; margin-right: 18px; color: #000; }
.winbtns svg { width: 12px; height: 12px; }
.winbtns .x { margin-left: 1px; }
.tabs { height: 24px; border-bottom: 1px solid #dadbdc; display: flex; color: #333; }
.tab { display: flex; justify-content: center; align-items: center; height: 24px; padding-bottom: 1px; }
.file { width: 56px; background: #0063b1; color: #fff; height: 23px; padding: 0; }
.home { width: 58px; background: #f5f6f7; border: 1px solid #dadbdc; border-bottom: 0; }
.share { width: 58px; }
.view { width: 55px; }
.collapse { width: 12px; height: 12px; margin: 5px 8px 0 auto; color: #999; }
.help { width: 16px; height: 16px; margin: 3px 4px 0 0; border-radius: 50%; background: #0b61b0; color: #fff; text-align: center; font-weight: 700; font-size: 12px; line-height: 16px; }
.ribbon { height: 92px; background: #f5f6f7; border-bottom: 1px solid #d4d5d6; display: flex; color: #222; }
.group { display: flex; flex-direction: column; background: linear-gradient(#e2e3e4, #e2e3e4) right 4px / 1px 85px no-repeat; background-position: right 4px; }
.g1 { width: 263px; } .g2 { width: 165px; } .g3 { width: 83px; } .g4 { width: 133px; } .g5 { width: 115px; }
.gbody { height: 75px; display: flex; }
.glabel { height: 14px; display: flex; justify-content: center; color: #444; padding-right: 2px; }
.org { padding-right: 4px; }
.big { display: flex; flex-direction: column; align-items: center; padding-top: 7px; line-height: 13px; }
.big svg { width: 32px; height: 32px; margin-bottom: 3px; }
.pinb { width: 64px; margin-left: 7px; }
.cp { width: 43px; margin-left: 1px; }
.ps { width: 41px; margin-right: 4px; }
.newb { width: 42px; margin: 0 4px 0 4px; }
.prop { width: 60px; margin: 0 2px 0 1.5px; }
.big .caret { width: 5px; height: 3px; margin-top: 5px; }
.col { padding-top: 4px; display: flex; flex-direction: column; }
.cmd { height: 22px; display: flex; align-items: center; gap: 3px; }
.cmd svg { width: 16px; height: 16px; }
.dim, .grey { color: #777b80; }
.grey { color: #65696d; }
.cmd .caret { width: 5px; height: 3px; margin-left: 1px; color: #aaa; }
.cmd .caret.dark, .caret.dark { color: #222; }
.solo { gap: 0; }
.wide { padding-top: 8px; }
.wide .cmd { height: 29px; }
.tight { width: 77px; margin-left: 8px; }
.tight .cmd { gap: 2px; }
.inner { width: 1px; height: 55px; background: #e2e3e4; margin: 9px 6px 0 0; }
.g5 .col { margin-left: 7px; }

.address { height: 34px; display: flex; align-items: center; color: #111; }
.a1 { width: 14px; height: 14px; margin-left: 12px; color: #555; }
.a2 { width: 14px; height: 14px; margin-left: 16px; transform: scaleX(-1); color: #ccc; }
.a3 { width: 9px; height: 9px; margin-left: 12px; color: #777; }
.a4 { width: 14px; height: 14px; margin-left: 9px; color: #666; transform: rotate(90deg); }
.crumbs { width: 455px; height: 23px; border: 1px solid #d9d9d9; margin-left: 6px; display: flex; align-items: center; padding-left: 3px; }
.crumbs .i16 { margin-bottom: 1px; }
.chev { width: 8px; height: 8px; margin: 0 7.5px; color: #666; }
.crumbs .i16 + .chev { margin-left: 4px; margin-right: 8px; }
.drop { width: 12px; height: 12px; margin-left: auto; margin-right: 1px; color: #666; }
.refresh { width: 20px; height: 21px; border-left: 1px solid #d9d9d9; padding: 4px 3px; }
.refresh svg { width: 12px; height: 13px; }
.search { width: 202px; height: 23px; border: 1px solid #d9d9d9; margin-left: 9px; padding: 0 6px 0 8px; display: flex; align-items: center; justify-content: space-between; color: #666; }
.search svg { width: 16px; height: 16px; }

.main { height: 388px; display: flex; }
.tree { width: 139px; overflow: hidden; padding-top: 1px; }
.node { height: 24px; display: flex; align-items: center; gap: 5px; }
.node svg { width: 16px; height: 16px; }
.l1 { padding-left: 32px; } .l2 { padding-left: 40px; } .l3 { padding-left: 48px; }
.current { background: #d9d9d9; }
.tbar { margin-left: 1px; width: 16px; margin-top: 1px; height: 387px; }
.tbar svg { margin-left: 1.5px; }
.tthumb { width: 15px; height: 114px; margin-top: 149px; background: #cdcdcd; }
.pane { width: 624px; margin-left: 5px; display: flex; flex-direction: column; color: #666; }
.head { height: 28px; display: flex; color: #4c607a; }
.h { display: flex; align-items: center; border-right: 1px solid #e5e5e5; margin-bottom: 1px; padding-left: 6px; }
.hn { width: 271px; padding-left: 16px; position: relative; }
.sort { position: absolute; left: 135px; top: -2px; width: 11px; height: 11px; color: #999; }
.hd { width: 144px; } .ht { width: 120px; } .hs { width: 80px; }
.rows { flex: 1; padding: 4px 0 0 13px; }
.row { width: 598px; height: 21px; padding-left: 4px; display: flex; align-items: center; }
.row svg { width: 16px; height: 16px; margin: 0 4px 1px 0; }
.cn { width: 240px; color: #000; } .cd { width: 144px; } .ct { width: 120px; }
.cs { margin-left: auto; margin-right: 4px; }
.hover { background: #e5f3ff; }
.focus { border: 1px solid #99d1ff; height: 22px; padding-left: 3px; }
.focus .cs { margin-right: 3px; }
.hbar { height: 16px; background: #f0f0f0; display: flex; align-items: center; color: #505050; }
.hbar svg { width: 12px; height: 12px; margin: 0 3px 1px 1px; }
.hbar i { width: 588px; height: 15px; background: #cdcdcd; margin-right: 3px; }
.status { height: 24px; display: flex; align-items: center; padding-left: 14px; color: #2c4468; }
.mode { width: 22px; height: 23px; margin-left: auto; background: #cce8ff; border: 1px solid #45a5c7; display: flex; align-items: center; justify-content: center; }
.mode svg { width: 17px; height: 13px; }
.large { width: 14px; height: 14px; margin: 0 9px 3px 4px; }

.mark { position: absolute; left: 1039px; top: 607px; width: 194px; height: 66px; }
.wordmark { font: 400 52px Roboto, sans-serif; fill: #888; stroke: #888; stroke-width: .7px; }
.wordmark text:last-child { transform: translateX(1px); }

.taskbar { height: 40px; background: linear-gradient(90deg, #00141c 45%, #020b20); display: flex; color: #fff; }
.start { width: 48px; display: flex; align-items: center; justify-content: center; }
.start svg { width: 16px; height: 16px; }
.find { width: 288px; background: #f0f0f0; border: 1px solid #bcbcbc; display: flex; align-items: center; font-size: 14.3px; color: #333; padding: 1px 0 0 11px; }
.find svg { width: 18px; height: 18px; margin: 0 9px 1px 0; }
.task { width: 48px; margin-right: 1px; display: flex; align-items: center; justify-content: center; }
.first { margin-right: 3px; }
.task.run { background: linear-gradient(#76b9ed, #76b9ed) center bottom / 40px 2px no-repeat; }
.task.active { background: linear-gradient(#76b9ed, #76b9ed) center bottom / 48px 2px no-repeat, #30434b; }
.tv { width: 16px; height: 16px; }
.i24 { width: 24px; height: 24px; }
.i22 { width: 22px; height: 22px; }
.term { width: 22px; height: 19px; margin-right: 2px; }
.tray { margin-left: auto; display: flex; align-items: center; }
.up { width: 14px; height: 8px; margin-right: 11px; }
.meet { width: 14px; height: 16px; margin-right: 9px; }
.net { width: 16px; height: 14px; margin-right: 8px; }
.vol { width: 17px; height: 14px; }
.clock { width: 53px; margin-left: 9px; display: flex; flex-direction: column; align-items: center; gap: 4px; }
.note { width: 16px; height: 16px; margin: 0 20px 0 17px; }
.peek { width: 1px; height: 40px; background: #3f4756; margin-right: 4px; }
</style>
